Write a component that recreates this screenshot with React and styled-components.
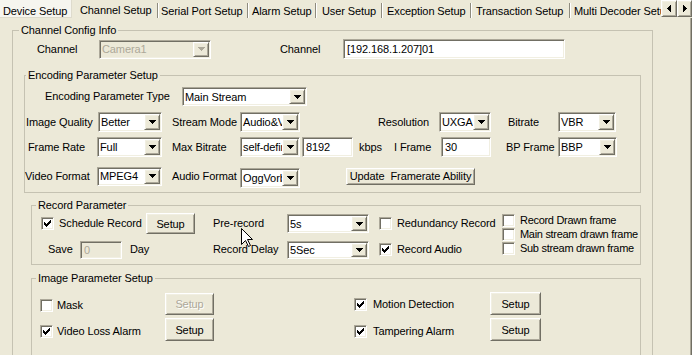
import React from 'react';
import styled, { createGlobalStyle, css } from 'styled-components';

const C = {
  face: '#ECE9D8',
  light: '#F1EFE2',
  hi: '#FFFFFF',
  shadow: '#ACA899',
  dark: '#716F64',
  disabled: '#ACA899',
};

const Global = createGlobalStyle`
  html, body { margin: 0; padding: 0; background: ${C.face}; }
  body { font-family: "Liberation Sans", Arial, sans-serif; font-size: 11px; letter-spacing: -0.1px; color: #000; }
`;

const sunken = css`
  border: 1px solid;
  border-color: ${C.shadow} ${C.hi} ${C.hi} ${C.shadow};
  box-shadow: inset 1px 1px 0 ${C.dark}, inset -1px -1px 0 ${C.light};
`;

const raised = css`
  border: 1px solid;
  border-color: ${C.hi} ${C.dark} ${C.dark} ${C.hi};
  box-shadow: inset 1px 1px 0 ${C.light}, inset -1px -1px 0 ${C.shadow};
`;

const Screen = styled.div`
  position: relative;
  width: 692px;
  height: 355px;
  overflow: hidden;
  background: ${C.face};
`;

const TabBar = styled.div`
  display: flex;
  height: 18px;
`;

const Tab = styled.div`
  position: relative;
  flex: none;
  box-sizing: border-box;
  width: ${p => p.$w}px;
  height: 18px;
  padding: ${p => (p.$active ? 4 : 5)}px 0 0 ${p => p.$pl}px;
  line-height: 13px;
  white-space: nowrap;
  overflow: hidden;
  background: ${p => (p.$hot ? '#F6F5EF' : 'transparent')};
  ${p => p.$hot && css`box-shadow: inset -1px -1px 0 #DEDBCD;`}
  ${p =>
    p.$sep &&
    css`
      &::after {
        content: '';
        position: absolute;
        right: 0;
        top: 3px;
        bottom: 0;
        width: 0;
        border-left: 1px solid #8E8B7E;
        border-right: 1px solid ${C.hi};
      }
    `}
`;

const Scroller = styled.div`
  display: flex;
  flex: none;
`;

const ArrowBtn = styled.div`
  box-sizing: border-box;
  width: ${p => p.$w}px;
  height: 17px;
  ${raised};
  background: ${C.face};
  display: flex;
  align-items: center;
  justify-content: center;
`;

const Page = styled.div`
  height: 337px;
  box-sizing: border-box;
  padding-top: 6px;
  overflow: hidden;
  box-shadow: inset -1px 0 0 ${C.dark}, inset -2px 0 0 ${C.shadow};
`;

const Group = styled.fieldset`
  box-sizing: border-box;
  min-width: 0;
  margin: ${p => p.$mt}px 0 0 ${p => p.$ml}px;
  width: ${p => p.$w}px;
  ${p => p.$h && `height: ${p.$h}px;`}
  padding: 0 0 ${p => p.$pb || 0}px 0;
  border: 1px solid #C5C2B2;
`;

const Legend = styled.legend`
  padding: 0 2px;
  margin-left: ${p => p.$ml}px;
  line-height: 13px;
  font-size: 11px;
`;

const Row = styled.div`
  display: flex;
  align-items: center;
  height: ${p => p.$h}px;
  margin-top: ${p => p.$mt || 0}px;
  padding-left: ${p => p.$pl || 0}px;
`;

const Label = styled.span`
  flex: none;
  display: block;
  width: ${p => (p.$w ? `${p.$w}px` : 'auto')};
  margin-left: ${p => p.$ml || 0}px;
  line-height: 13px;
  white-space: nowrap;
  ${p => p.$tight && css`letter-spacing: -0.3px;`}
  color: ${p => (p.$disabled ? C.disabled : '#000')};
`;

const ComboBox = styled.div`
  flex: none;
  display: flex;
  box-sizing: border-box;
  width: ${p => p.$w}px;
  height: ${p => p.$h}px;
  margin-left: ${p => p.$ml || 0}px;
  ${p => p.$dy && css`align-self: flex-start; margin-top: ${p.$dy}px;`}
  padding: 1px;
  ${sunken};
  background: ${p => (p.$disabled ? C.face : '#fff')};
`;

const ComboValue = styled.span`
  flex: 1;
  min-width: 0;
  overflow: hidden;
  white-space: nowrap;
  padding-left: 1px;
  display: flex;
  align-items: center;
  color: ${p => (p.$disabled ? C.disabled : '#000')};
`;

const DropBtn = styled.span`
  flex: none;
  width: 16px;
  box-sizing: border-box;
  ${raised};
  background: ${C.face};
  display: flex;
  align-items: center;
  justify-content: center;
`;

const TextBox = styled.div`
  flex: none;
  box-sizing: border-box;
  width: ${p => p.$w}px;
  height: ${p => p.$h}px;
  margin-left: ${p => p.$ml || 0}px;
  padding: 1px 3px;
  ${sunken};
  display: flex;
  align-items: center;
  white-space: nowrap;
  overflow: hidden;
  background: ${p => (p.$disabled ? C.face : '#fff')};
  color: ${p => (p.$disabled ? C.disabled : '#000')};
`;

const PushButton = styled.div`
  flex: none;
  box-sizing: border-box;
  width: ${p => p.$w}px;
  height: ${p => p.$h}px;
  margin-left: ${p => p.$ml || 0}px;
  ${p => p.$dy && css`align-self: flex-start; margin-top: ${p.$dy}px;`}
  ${raised};
  background: ${C.face};
  display: flex;
  align-items: center;
  justify-content: center;
  white-space: nowrap;
  color: ${p => (p.$disabled ? C.disabled : '#000')};
  ${p => p.$disabled && css`text-shadow: 1px 1px 0 #fff;`}
`;

const CheckBox = styled.span`
  flex: none;
  box-sizing: border-box;
  width: 13px;
  height: 13px;
  ${sunken};
  background: #fff;
  display: flex;
  align-items: center;
  justify-content: center;
`;

const Item = styled.div`
  display: flex;
  align-items: center;
  margin-left: ${p => p.$ml || 0}px;
  ${p => p.$dy && css`margin-top: ${p.$dy}px;`}
`;

const RecordGrid = styled.div`
  display: grid;
  grid-template-columns: 172px 74px 92px 123px auto;
  grid-template-rows: 21px 21px;
  row-gap: 5px;
  align-items: center;
  margin-top: 1px;
  padding-left: 9px;
`;

const Stack = styled.div`
  grid-column: 5;
  grid-row: 1 / span 2;
  align-self: start;
  display: flex;
  flex-direction: column;
`;

const StackLine = styled.div`
  display: flex;
  align-items: center;
  height: 14px;
`;

const ImageGrid = styled.div`
  display: grid;
  grid-template-columns: 125px 189px 136px 51px;
  grid-template-rows: 23px 23px;
  row-gap: 3px;
  align-items: center;
  margin-top: 7px;
  padding-left: 8px;
`;

const CursorWrap = styled.div`
  position: absolute;
  left: 241px;
  top: 228px;
  width: 12px;
  height: 19px;
  pointer-events: none;
`;

const DownArrow = ({ color }) => (
  <svg width="7" height="4" viewBox="0 0 7 4" shapeRendering="crispEdges">
    <path d="M0 0h7v1h-1v1h-1v1h-1v1h-1v-1h-1v-1h-1v-1h-1z" fill={color} />
  </svg>
);

const LeftArrow = () => (
  <svg width="4" height="7" viewBox="0 0 4 7" shapeRendering="crispEdges">
    <path d="M3 0h1v7h-1v-1h-1v-1h-1v-1h-1v-1h1v-1h1v-1h1z" fill="#000" />
  </svg>
);

const RightArrow = () => (
  <svg width="4" height="7" viewBox="0 0 4 7" shapeRendering="crispEdges">
    <path d="M0 0h1v1h1v1h1v1h1v1h-1v1h-1v1h-1v1h-1z" fill="#000" />
  </svg>
);

const CheckMark = () => (
  <svg width="7" height="7" viewBox="0 0 7 7" shapeRendering="crispEdges">
    <path d="M6 0h1v3h-1v1h-1v1h-1v1h-1v1h-1v-1h-1v-1h-1v-3h1v1h1v1h1v-1h1v-1h1z" fill="#000" />
  </svg>
);

const Combo = ({ w, h = 20, value, disabled, ml, dy }) => (
  <ComboBox $w={w} $h={h} $ml={ml} $dy={dy} $disabled={disabled}>
    <ComboValue $disabled={disabled}>{value}</ComboValue>
    <DropBtn>
      <DownArrow color={disabled ? C.disabled : '#000'} />
    </DropBtn>
  </ComboBox>
);

const Check = ({ checked, label, gap = 5, ml, dy }) => (
  <Item $ml={ml} $dy={dy}>
    <CheckBox>{checked && <CheckMark />}</CheckBox>
    <Label $ml={gap}>{label}</Label>
  </Item>
);

const tabs = [
  { t: 'Device Setup', w: 72, pl: 3, hot: true },
  { t: 'Channel Setup', w: 87, pl: 8, active: true, sep: true },
  { t: 'Serial Port Setup', w: 90, pl: 2, sep: true },
  { t: 'Alarm Setup', w: 68, pl: 3, sep: true },
  { t: 'User Setup', w: 66, pl: 5, sep: true },
  { t: 'Exception Setup', w: 89, pl: 4, sep: true },
  { t: 'Transaction Setup', w: 99, pl: 4, sep: true },
  { t: 'Multi Decoder Setup', w: 90, pl: 3 },
];

export default function App() {
  return (
    <Screen>
      <Global />
      <TabBar>
        {tabs.map(tb => (
          <Tab key={tb.t} $w={tb.w} $pl={tb.pl} $hot={tb.hot} $active={tb.active} $sep={tb.sep}>
            {tb.t}
          </Tab>
        ))}
        <Scroller>
          <ArrowBtn $w={16}>
            <LeftArrow />
          </ArrowBtn>
          <ArrowBtn $w={15}>
            <RightArrow />
          </ArrowBtn>
        </Scroller>
      </TabBar>
      <Page>
        <Group $ml={12} $w={641} $h={340} $mt={0}>
          <Legend $ml={6}>Channel Config Info</Legend>
          <Row $mt={2} $h={20} $pl={24}>
            <Label $w={62}>Channel</Label>
            <Combo w={112} h={19} value="Camera1" disabled />
            <Label $w={63} $ml={69}>Channel</Label>
            <TextBox $w={222} $h={20}>[192.168.1.207]01</TextBox>
          </Row>

          <Group $ml={11} $w={617} $mt={10} $pb={6}>
            <Legend $ml={1}>Encoding Parameter Setup</Legend>
            <Row $mt={5} $h={19} $pl={20}>
              <Label $w={137}>Encoding Parameter Type</Label>
              <Combo w={125} h={19} value="Main Stream" />
            </Row>
            <Row $mt={6} $h={20} $pl={1}>
              <Label $w={72}>Image Quality</Label>
              <Combo w={64} value="Better" />
              <Label $w={68} $ml={10}>Stream Mode</Label>
              <Combo w={60} value="Audio&Video" />
              <Label $w={61} $ml={78}>Resolution</Label>
              <Combo w={52} value="UXGA" />
              <Label $w={50} $ml={17}>Bitrate</Label>
              <Combo w={58} value="VBR" />
            </Row>
            <Row $mt={5} $h={20} $pl={3}>
              <Label $w={69}>Frame Rate</Label>
              <Combo w={65} value="Full" />
              <Label $w={68} $ml={10}>Max Bitrate</Label>
              <Combo w={60} value="self-define" />
              <TextBox $w={51} $h={20} $ml={2}>8192</TextBox>
              <Label $w={35} $ml={6}>kbps</Label>
              <Label $w={47}>I Frame</Label>
              <TextBox $w={50} $h={20}>30</TextBox>
              <Label $w={52} $ml={15}>BP Frame</Label>
              <Combo w={59} value="BBP" />
            </Row>
            <Row $mt={9} $h={20} $pl={0}>
              <Label $w={72}>Video Format</Label>
              <Combo w={65} h={19} value="MPEG4" />
              <Label $w={68} $ml={10}>Audio Format</Label>
              <Combo w={60} h={20} value="OggVorbis" dy={2} />
              <PushButton $w={129} $h={17} $ml={46}>Update&nbsp; Framerate Ability</PushButton>
            </Row>
          </Group>

          <Group $ml={18} $w={610} $mt={6} $pb={4}>
            <Legend $ml={4}>Record Parameter</Legend>
            <RecordGrid>
              <Item>
                <CheckBox>
                  <CheckMark />
                </CheckBox>
                <Label $w={87} $ml={5}>Schedule Record</Label>
                <PushButton $w={49} $h={21}>Setup</PushButton>
              </Item>
              <Label>Pre-record</Label>
              <Combo w={82} h={19} value="5s" />
              <Check label="Redundancy Record" />
              <Stack>
                <StackLine>
                  <CheckBox />
                  <Label $ml={5} $tight>Record Drawn frame</Label>
                </StackLine>
                <StackLine>
                  <CheckBox />
                  <Label $ml={5} $tight>Main stream drawn frame</Label>
                </StackLine>
                <StackLine>
                  <CheckBox />
                  <Label $ml={5} $tight>Sub stream drawn frame</Label>
                </StackLine>
              </Stack>
              <Item>
                <Label $w={32} $ml={7}>Save</Label>
                <TextBox $w={42} $h={18} $disabled>0</TextBox>
                <Label $ml={8}>Day</Label>
              </Item>
              <Label>Record Delay</Label>
              <Combo w={82} h={18} value="5Sec" />
              <Check checked label="Record Audio" />
            </RecordGrid>
          </Group>

          <Group $ml={18} $w={610} $mt={7} $h={100}>
            <Legend $ml={4}>Image Parameter Setup</Legend>
            <ImageGrid>
              <Check label="Mask" gap={4} dy={4} />
              <PushButton $w={49} $h={22} $disabled>Setup</PushButton>
              <Check checked label="Motion Detection" gap={6} dy={2} />
              <PushButton $w={51} $h={23}>Setup</PushButton>
              <Check checked label="Video Loss Alarm" gap={4} dy={3} />
              <PushButton $w={49} $h={23}>Setup</PushButton>
              <Check checked label="Tampering Alarm" gap={6} dy={3} />
              <PushButton $w={51} $h={23}>Setup</PushButton>
            </ImageGrid>
          </Group>
        </Group>
      </Page>
      <CursorWrap>
        <svg width="12" height="19" viewBox="0 0 12 19">
          <path
            d="M0.5 0.5 L0.5 16.5 L4.5 12.5 L7.5 18.5 L9.5 17.5 L6.5 11.5 L11.5 11.5 Z"
            fill="#fff"
            stroke="#000"
            strokeWidth="1"
          />
        </svg>
      </CursorWrap>
    </Screen>
  );
}
